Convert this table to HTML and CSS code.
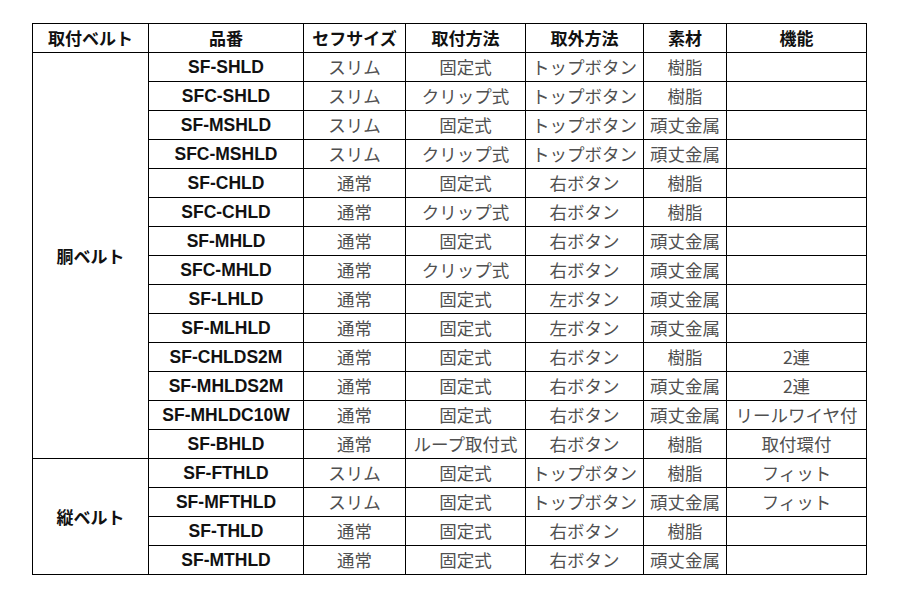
FILE: index.html
```html
<!DOCTYPE html>
<html lang="ja">
<head>
<meta charset="utf-8">
<link rel="stylesheet" href="styles.css">
</head>
<body>
<table class="spec">
  <colgroup>
    <col class="c1"><col class="c2"><col class="c3"><col class="c4"><col class="c5"><col class="c6"><col class="c7">
  </colgroup>
  <thead>
    <tr><th>取付ベルト</th><th>品番</th><th>セフサイズ</th><th>取付方法</th><th>取外方法</th><th>素材</th><th>機能</th></tr>
  </thead>
  <tbody>
    <tr><th class="group" rowspan="14">胴ベルト</th><td class="model">SF-SHLD</td><td>スリム</td><td>固定式</td><td>トップボタン</td><td>樹脂</td><td></td></tr>
    <tr><td class="model">SFC-SHLD</td><td>スリム</td><td>クリップ式</td><td>トップボタン</td><td>樹脂</td><td></td></tr>
    <tr><td class="model">SF-MSHLD</td><td>スリム</td><td>固定式</td><td>トップボタン</td><td>頑丈金属</td><td></td></tr>
    <tr><td class="model">SFC-MSHLD</td><td>スリム</td><td>クリップ式</td><td>トップボタン</td><td>頑丈金属</td><td></td></tr>
    <tr><td class="model">SF-CHLD</td><td>通常</td><td>固定式</td><td>右ボタン</td><td>樹脂</td><td></td></tr>
    <tr><td class="model">SFC-CHLD</td><td>通常</td><td>クリップ式</td><td>右ボタン</td><td>樹脂</td><td></td></tr>
    <tr><td class="model">SF-MHLD</td><td>通常</td><td>固定式</td><td>右ボタン</td><td>頑丈金属</td><td></td></tr>
    <tr><td class="model">SFC-MHLD</td><td>通常</td><td>クリップ式</td><td>右ボタン</td><td>頑丈金属</td><td></td></tr>
    <tr><td class="model">SF-LHLD</td><td>通常</td><td>固定式</td><td>左ボタン</td><td>頑丈金属</td><td></td></tr>
    <tr><td class="model">SF-MLHLD</td><td>通常</td><td>固定式</td><td>左ボタン</td><td>頑丈金属</td><td></td></tr>
    <tr><td class="model">SF-CHLDS2M</td><td>通常</td><td>固定式</td><td>右ボタン</td><td>樹脂</td><td>2連</td></tr>
    <tr><td class="model">SF-MHLDS2M</td><td>通常</td><td>固定式</td><td>右ボタン</td><td>頑丈金属</td><td>2連</td></tr>
    <tr><td class="model">SF-MHLDC10W</td><td>通常</td><td>固定式</td><td>右ボタン</td><td>頑丈金属</td><td>リールワイヤ付</td></tr>
    <tr><td class="model">SF-BHLD</td><td>通常</td><td>ループ取付式</td><td>右ボタン</td><td>樹脂</td><td>取付環付</td></tr>
    <tr><th class="group" rowspan="4">縦ベルト</th><td class="model">SF-FTHLD</td><td>スリム</td><td>固定式</td><td>トップボタン</td><td>樹脂</td><td>フィット</td></tr>
    <tr><td class="model">SF-MFTHLD</td><td>スリム</td><td>固定式</td><td>トップボタン</td><td>頑丈金属</td><td>フィット</td></tr>
    <tr><td class="model">SF-THLD</td><td>通常</td><td>固定式</td><td>右ボタン</td><td>樹脂</td><td></td></tr>
    <tr><td class="model">SF-MTHLD</td><td>通常</td><td>固定式</td><td>右ボタン</td><td>頑丈金属</td><td></td></tr>
  </tbody>
</table>
</body>
</html>
```

FILE: styles.css
```css
html, body {
  margin: 0;
  padding: 0;
  background: #ffffff;
}

.spec {
  margin: 23px 0 0 32px;
  border-collapse: collapse;
  table-layout: fixed;
  width: 835px;
  font-family: "Noto Sans CJK JP", "Liberation Sans", sans-serif;
  font-size: 17.5px;
  color: #505050;
}

.c1 { width: 116px; }
.c2 { width: 155px; }
.c3 { width: 102px; }
.c4 { width: 120px; }
.c5 { width: 118px; }
.c6 { width: 83px; }
.c7 { width: 140px; }

.spec th,
.spec td {
  border: 1px solid #000000;
  height: 28px;
  padding: 0;
  line-height: 20px;
  text-align: center;
  vertical-align: middle;
  white-space: nowrap;
  overflow: hidden;
}

.spec th {
  font-size: 17px;
  font-weight: 700;
  color: #111111;
}

.spec td.model {
  font-family: "Liberation Sans", Arial, sans-serif;
  font-weight: 700;
  font-size: 17.5px;
  color: #111111;
}
```
